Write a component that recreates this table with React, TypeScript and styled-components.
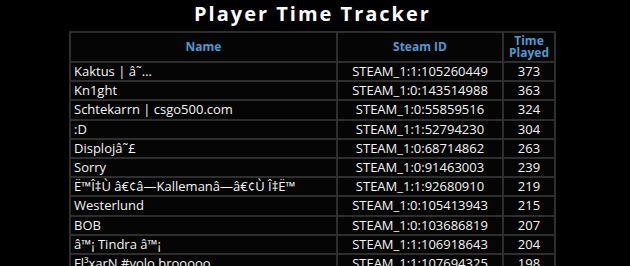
import * as React from "react";
import styled, { createGlobalStyle } from "styled-components";

const GlobalStyle = createGlobalStyle`
  html, body {
    margin: 0;
    padding: 0;
    background: #000;
  }
  body {
    font-family: "Open Sans", "Noto Sans", sans-serif;
    color: #fff;
  }
`;

const players = [
  { name: "Kaktus | â˜…", id: "STEAM_1:1:105260449", time: 373 },
  { name: "Kn1ght", id: "STEAM_1:0:143514988", time: 363 },
  { name: "Schtekarrn | csgo500.com", id: "STEAM_1:0:55859516", time: 324 },
  { name: ":D", id: "STEAM_1:1:52794230", time: 304 },
  { name: "Displojâ˜£", id: "STEAM_1:0:68714862", time: 263 },
  { name: "Sorry", id: "STEAM_1:0:91463003", time: 239 },
  { name: "Ë™Î‡Ù â€¢â—Kallemanâ—â€¢Ù Î‡Ë™", id: "STEAM_1:1:92680910", time: 219 },
  { name: "Westerlund", id: "STEAM_1:0:105413943", time: 215 },
  { name: "BOB", id: "STEAM_1:0:103686819", time: 207 },
  { name: "â™¡ Tindra â™¡", id: "STEAM_1:1:106918643", time: 204 },
  { name: "Fl³xarN #yolo brooooo", id: "STEAM_1:1:107694325", time: 198 },
];

const Page = styled.div`
  padding: 3px 5px 0 0;
`;

const Title = styled.h1`
  margin: 0 0 6px;
  text-align: center;
  font-size: 20px;
  line-height: 22px;
  font-weight: 700;
  letter-spacing: 2px;
  color: #fff;
`;

const Table = styled.table`
  width: 485px;
  table-layout: fixed;
  margin: 0 auto;
  border-collapse: collapse;
  border: 2px solid #3c3c3c;
  background: #050505;
  font-size: 13px;
`;

const Head = styled.th`
  border: 2px solid #2e2e2e;
  color: #4d9ad2;
  font-weight: 700;
  font-size: 12px;
  line-height: 12px;
  height: 28px;
  padding: 0 4px;
  text-align: center;
`;

const Cell = styled.td<{ $align?: string }>`
  border: 2px solid #2e2e2e;
  padding: 0 3px;
  height: 17.2px;
  line-height: 17px;
  text-align: ${(p) => p.$align || "left"};
  white-space: nowrap;
  overflow: hidden;
  color: #f4f4f4;
`;

export default function App() {
  return (
    <Page>
      <GlobalStyle />
      <Title>Player Time Tracker</Title>
      <Table>
        <colgroup>
          <col style={{ width: 267 }} />
          <col style={{ width: 166 }} />
          <col style={{ width: 52 }} />
        </colgroup>
        <thead>
          <tr>
            <Head>Name</Head>
            <Head>Steam ID</Head>
            <Head>
              Time
              <br />
              Played
            </Head>
          </tr>
        </thead>
        <tbody>
          {players.map((p) => (
            <tr key={p.id}>
              <Cell>{p.name}</Cell>
              <Cell $align="center">{p.id}</Cell>
              <Cell $align="center">{p.time}</Cell>
            </tr>
          ))}
        </tbody>
      </Table>
    </Page>
  );
}
